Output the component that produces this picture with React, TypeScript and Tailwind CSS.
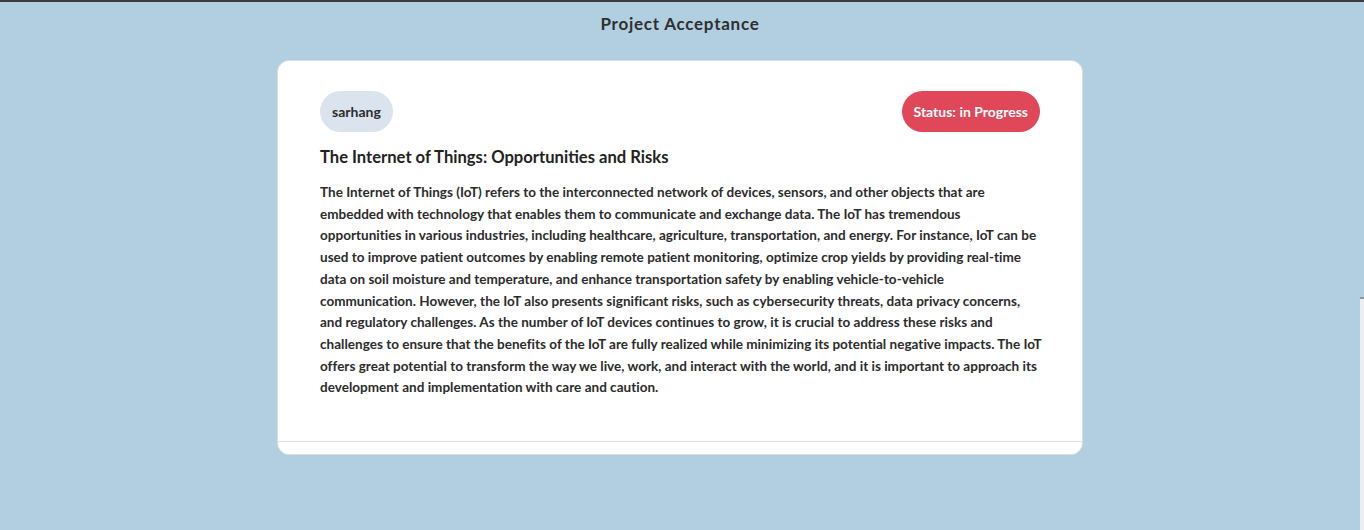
const lines = [
  "The Internet of Things (IoT) refers to the interconnected network of devices, sensors, and other objects that are",
  "embedded with technology that enables them to communicate and exchange data. The IoT has tremendous",
  "opportunities in various industries, including healthcare, agriculture, transportation, and energy. For instance, IoT can be",
  "used to improve patient outcomes by enabling remote patient monitoring, optimize crop yields by providing real-time",
  "data on soil moisture and temperature, and enhance transportation safety by enabling vehicle-to-vehicle",
  "communication. However, the IoT also presents significant risks, such as cybersecurity threats, data privacy concerns,",
  "and regulatory challenges. As the number of IoT devices continues to grow, it is crucial to address these risks and",
  "challenges to ensure that the benefits of the IoT are fully realized while minimizing its potential negative impacts. The IoT",
  "offers great potential to transform the way we live, work, and interact with the world, and it is important to approach its",
  "development and implementation with care and caution.",
];

export default function App() {
  return (
    <div
      className="relative min-h-[530px] w-full border-t-2 border-[#3c3c3c] bg-[#b1cfe0] text-[#2b2b2b]"
      style={{ fontFamily: "Lato, 'Noto Sans', sans-serif" }}
    >
      <div className="w-[1360px]">
        <h1 className="pt-[12px] text-center text-[17px] font-bold leading-[20px] tracking-[0.75px] text-[#2f2f2f]">
          Project Acceptance
        </h1>
        <div className="mx-auto mt-[26px] w-[806px] overflow-hidden rounded-[12px] border border-[#dcdcdc] bg-white">
          <div className="px-[42px] pt-[30px] pb-[42px]">
            <div className="flex items-center justify-between">
              <span className="flex h-[41px] items-center rounded-full bg-[#dbe3ee] px-[12px] text-[14px] font-bold text-[#2b2b2b]">
                sarhang
              </span>
              <span className="flex h-[41px] items-center rounded-full bg-[#e04759] px-[12px] text-[14px] font-bold text-white">
                Status: in Progress
              </span>
            </div>
            <h2 className="mt-[14px] text-[16.6px] font-bold leading-[22px] text-[#222]">
              The Internet of Things: Opportunities and Risks
            </h2>
            <p className="mt-[14px] whitespace-nowrap text-[13.5px] font-bold leading-[21.7px] tracking-[0.02px] text-[#2b2b2b]">
              {lines.map((l, i) => (
                <span key={i}>
                  {l}
                  {i < lines.length - 1 && <br />}
                </span>
              ))}
            </p>
          </div>
          <div className="h-[13px] border-t border-[#e2e2e2]" />
        </div>
      </div>
      <div className="absolute right-0 top-[295px] h-[235px] w-[4px] border-t-2 border-[#8a98a6] bg-[#eceef2]" />
    </div>
  );
}
